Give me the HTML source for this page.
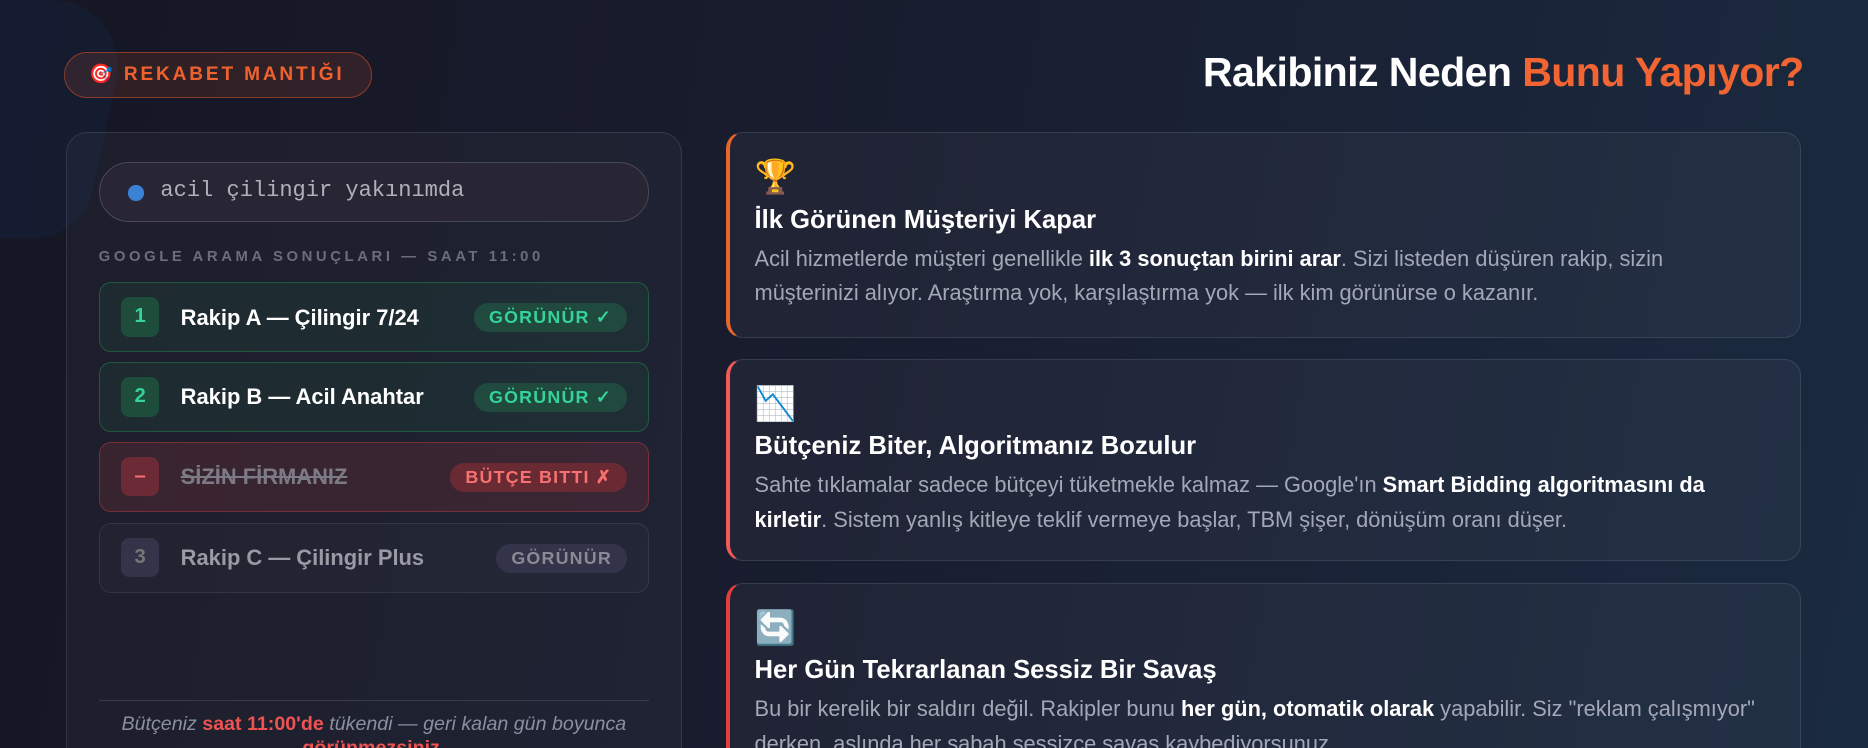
<!DOCTYPE html>
<html><head><meta charset="utf-8"><style>
html,body{margin:0;padding:0;}
html{width:1868px;height:748px;overflow:hidden;background:#161a2a;}
body{zoom:1.19133;width:1568px;height:628px;position:relative;overflow:hidden;font-family:"Liberation Sans",sans-serif;
background:linear-gradient(100deg,#161624 0%,#181c2d 40%,#1a2438 75%,#1a2a40 100%);}
.blob{position:absolute;left:-70px;top:0px;width:160px;height:200px;background:#15203a;border-radius:30px 70px 40px 10px;transform:skewX(-12deg);opacity:.55}
.badge{position:absolute;left:54px;top:44px;width:257px;height:37px;border:1px solid #8a3a2a;border-radius:20px;background:rgba(240,98,45,.12);color:#f0622d;font-weight:bold;font-size:16px;letter-spacing:2.4px;line-height:37px;text-indent:20px;box-sizing:content-box;white-space:nowrap}
h1{position:absolute;right:54px;top:41px;margin:0;font-size:34.5px;color:#fff;font-weight:bold;letter-spacing:-.5px}
h1 span{color:#f26532}
.panel{position:absolute;left:55px;top:111px;width:516px;height:560px;border:1px solid rgba(255,255,255,.1);border-radius:18px;background:rgba(255,255,255,.03)}
.search{position:absolute;left:27px;top:24px;width:460px;height:49px;border:1px solid #4a4856;border-radius:26px;background:#282635}
.search i{position:absolute;left:24px;top:19px;width:13px;height:13px;border-radius:50%;background:#3a82d6}
.search span{position:absolute;left:51px;top:13px;font-family:"Liberation Mono",monospace;font-size:18.5px;color:#b0b0b8}
.lab{position:absolute;left:27px;top:97px;font-size:12.5px;font-weight:bold;letter-spacing:3.0px;color:#6b6e7a;white-space:nowrap}
.row{position:absolute;left:27px;width:460px;height:57px;border-radius:10px;border:1px solid}
.row .n{position:absolute;left:18px;top:12px;width:32px;height:33px;border-radius:7px;text-align:center;line-height:33px;font-weight:bold;font-size:17px}
.row .t{position:absolute;left:68px;top:18px;font-size:18.4px;font-weight:bold;color:#fff}
.row .b{position:absolute;right:17px;top:17px;height:24px;line-height:24px;border-radius:12px;padding:0 13px;font-size:15px;font-weight:bold;letter-spacing:1px}
.g{background:rgba(34,197,94,.08);border-color:rgba(34,197,94,.3)}
.g .n{background:#1e4d3c;color:#34d399}.g .b{background:#1f4a3d;color:#34d399}
.r{background:rgba(239,68,68,.13);border-color:rgba(239,68,68,.35)}
.r .n{background:#6b2a35;color:#f87171}.r .t{color:#7b7a85;text-decoration:line-through}.r .b{background:#6a2a33;color:#f87171}
.x{background:rgba(255,255,255,.02);border-color:rgba(255,255,255,.08)}
.x .n{background:#33334a;color:#777}.x .t{color:#9a9aa5}.x .b{background:#33334a;color:#8a8a95}
.sep{position:absolute;left:27px;top:476px;width:462px;height:1px;background:rgba(255,255,255,.12)}
.foot{position:absolute;left:20px;top:487px;width:476px;text-align:center;font-size:16.5px;font-style:italic;color:#8b8fa0;line-height:20px}
.foot b{color:#f05252;font-style:normal}
.card{position:absolute;left:609px;width:903px;border:1px solid rgba(255,255,255,.1);border-left:4px solid;border-radius:14px;background:rgba(255,255,255,.035);box-sizing:border-box}
.card .ic{position:absolute;left:21px;top:21px;font-size:28px;line-height:34px}
.card h3{position:absolute;left:21px;top:61px;margin:0;font-size:21.5px;color:#fff}
.card p{position:absolute;left:21px;top:91px;margin:0;font-size:18.3px;line-height:29px;color:#a3a8b8;width:845px}
.card p b{color:#fff}
</style></head><body>
<div class="blob"></div>
<div class="badge">🎯 REKABET MANTIĞI</div>
<h1>Rakibiniz Neden <span>Bunu Yapıyor?</span></h1>
<div class="panel">
<div class="search"><i></i><span>acil çilingir yakınımda</span></div>
<div class="lab">GOOGLE ARAMA SONUÇLARI — SAAT 11:00</div>
<div class="row g" style="top:125px"><div class="n">1</div><div class="t">Rakip A — Çilingir 7/24</div><div class="b">GÖRÜNÜR ✓</div></div>
<div class="row g" style="top:192px"><div class="n">2</div><div class="t">Rakip B — Acil Anahtar</div><div class="b">GÖRÜNÜR ✓</div></div>
<div class="row r" style="top:259px"><div class="n">–</div><div class="t">SİZİN FİRMANIZ</div><div class="b">BÜTÇE BITTI ✗</div></div>
<div class="row x" style="top:327px"><div class="n">3</div><div class="t">Rakip C — Çilingir Plus</div><div class="b">GÖRÜNÜR</div></div>
<div class="sep"></div>
<div class="foot">Bütçeniz <b>saat 11:00'de</b> tükendi — geri kalan gün boyunca<br><b>görünmezsiniz</b>.</div>
</div>
<div class="card" style="top:111px;height:173px;border-left-color:#e8662a"><div class="ic">🏆</div><h3>İlk Görünen Müşteriyi Kapar</h3><p>Acil hizmetlerde müşteri genellikle <b>ilk 3 sonuçtan birini arar</b>. Sizi listeden düşüren rakip, sizin müşterinizi alıyor. Araştırma yok, karşılaştırma yok — ilk kim görünürse o kazanır.</p></div>
<div class="card" style="top:301px;height:170px;border-left-color:#f05a5a"><div class="ic">📉</div><h3>Bütçeniz Biter, Algoritmanız Bozulur</h3><p>Sahte tıklamalar sadece bütçeyi tüketmekle kalmaz — Google'ın <b>Smart Bidding algoritmasını da kirletir</b>. Sistem yanlış kitleye teklif vermeye başlar, TBM şişer, dönüşüm oranı düşer.</p></div>
<div class="card" style="top:489px;height:180px;border-left-color:#e53e3e"><div class="ic">🔄</div><h3>Her Gün Tekrarlanan Sessiz Bir Savaş</h3><p>Bu bir kerelik bir saldırı değil. Rakipler bunu <b>her gün, otomatik olarak</b> yapabilir. Siz "reklam çalışmıyor" derken, aslında her sabah sessizce savaş kaybediyorsunuz.</p></div>
</body></html>
